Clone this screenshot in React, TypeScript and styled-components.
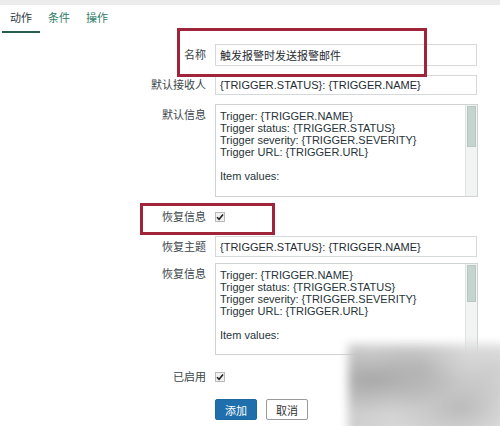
import React from "react";
import styled, { createGlobalStyle } from "styled-components";

const GlobalStyle = createGlobalStyle`
  html, body {
    margin: 0;
    padding: 0;
    background: #fff;
  }
  body {
    font-family: Arial, "Liberation Sans", "Noto Sans CJK SC", sans-serif;
    color: #1f2c33;
  }
`;

const defaultMessage = `Trigger: {TRIGGER.NAME}
Trigger status: {TRIGGER.STATUS}
Trigger severity: {TRIGGER.SEVERITY}
Trigger URL: {TRIGGER.URL}

Item values:

1. {ITEM.NAME1} ({HOST.NAME1}:{ITEM.KEY1}): {ITEM.VALUE1}
2. {ITEM.NAME2} ({HOST.NAME2}:{ITEM.KEY2}): {ITEM.VALUE2}
3. {ITEM.NAME3} ({HOST.NAME3}:{ITEM.KEY3}): {ITEM.VALUE3}

Original event ID: {EVENT.ID}`;

const tabs = ["动作", "条件", "操作"];

const MessageBox = ({ h, thumb }: { h: number; thumb: number }) => (
  <AreaWrap $h={h}>
    <TextArea defaultValue={defaultMessage} />
    <Track>
      <Thumb $h={thumb} />
    </Track>
  </AreaWrap>
);

const CheckBox = () => (
  <Box>
    <svg width="8" height="8" viewBox="0 0 8 8">
      <path d="M1 4.2 L3.1 6.3 L7 1.6" fill="none" stroke="#222" strokeWidth="1.6" />
    </svg>
  </Box>
);

export default function App() {
  return (
    <Page>
      <GlobalStyle />
      <TopStrip />
      <TabBar>
        {tabs.map((t, i) => (
          <Tab key={t} $active={i === 0}>
            {t}
          </Tab>
        ))}
      </TabBar>

      <Form>
        <Row $mb={9}>
          <Label>名称</Label>
          <TextInput defaultValue="触发报警时发送报警邮件" />
        </Row>
        <Row $mb={9}>
          <Label>默认接收人</Label>
          <TextInput $h={20} defaultValue="{TRIGGER.STATUS}: {TRIGGER.NAME}" />
        </Row>
        <Row $mb={10} $top>
          <Label $pt={4}>默认信息</Label>
          <MessageBox h={93} thumb={41} />
        </Row>
        <Row $mb={9} $h={20}>
          <Label>恢复信息</Label>
          <CheckBox />
        </Row>
        <Row $mb={6}>
          <Label>恢复主题</Label>
          <TextInput $h={21} defaultValue="{TRIGGER.STATUS}: {TRIGGER.NAME}" />
        </Row>
        <Row $mb={12} $top>
          <Label $pt={4}>恢复信息</Label>
          <MessageBox h={92} thumb={37} />
        </Row>
        <Row $mb={12} $h={20}>
          <Label>已启用</Label>
          <CheckBox />
        </Row>
        <Row $mb={0}>
          <span />
          <Buttons>
            <Button $primary>添加</Button>
            <Button>取消</Button>
          </Buttons>
        </Row>
      </Form>

      <Annotation $x={177} $y={28} $w={250} $h={49} />
      <Annotation $x={140} $y={203} $w={135} $h={32} />
      <Watermark />
    </Page>
  );
}

const Page = styled.div`
  position: relative;
  width: 500px;
  height: 426px;
  overflow: hidden;
`;

const TopStrip = styled.div`
  height: 5px;
  background: #ececec;
`;

const TabBar = styled.div`
  display: flex;
  padding-left: 2px;
`;

const Tab = styled.div<{ $active?: boolean }>`
  padding: 0 8px;
  font-size: 11px;
  line-height: 26px;
  color: ${(p) => (p.$active ? "#2b3a3f" : "#2f7d68")};
  border-bottom: 2px solid ${(p) => (p.$active ? "#255e4f" : "transparent")};
`;

const Form = styled.div`
  padding-top: 11px;
`;

const Row = styled.div<{ $mb: number; $top?: boolean; $h?: number }>`
  display: grid;
  grid-template-columns: 206px 263px;
  column-gap: 9px;
  align-items: ${(p) => (p.$top ? "start" : "center")};
  margin-bottom: ${(p) => p.$mb}px;
  ${(p) => (p.$h ? `height: ${p.$h}px;` : "")}
`;

const Label = styled.div<{ $pt?: number }>`
  text-align: right;
  font-size: 11px;
  line-height: 14px;
  color: #3a4549;
  padding-top: ${(p) => p.$pt || 0}px;
`;

const TextInput = styled.input<{ $h?: number }>`
  box-sizing: border-box;
  width: 262px;
  height: ${(p) => p.$h || 22}px;
  border: 1px solid #d6d9da;
  padding: 0 4px;
  font-family: Arial, "Liberation Sans", "Noto Sans CJK SC", sans-serif;
  font-size: 11px;
  color: #1f2c33;
  outline: none;
`;

const AreaWrap = styled.div<{ $h: number }>`
  position: relative;
  box-sizing: border-box;
  width: 263px;
  height: ${(p) => p.$h}px;
  border: 1px solid #cfd3d4;
  overflow: hidden;
`;

const TextArea = styled.textarea`
  display: block;
  box-sizing: border-box;
  width: 100%;
  height: 100%;
  border: none;
  padding: 5px 16px 0 4px;
  font-family: Arial, "Liberation Sans", sans-serif;
  font-size: 11px;
  line-height: 12px;
  color: #27343a;
  resize: none;
  overflow: hidden;
  outline: none;
`;

const Track = styled.div`
  position: absolute;
  top: 0;
  right: 0;
  bottom: 0;
  width: 11px;
  background: #f2f3f3;
  border-left: 1px solid #e2e4e4;
`;

const Thumb = styled.div<{ $h: number }>`
  margin: 1px 1px 0;
  height: ${(p) => p.$h}px;
  background: #c6d4cf;
  border: 1px solid #b6c6c0;
  box-sizing: border-box;
`;

const Box = styled.span`
  box-sizing: border-box;
  width: 10px;
  height: 10px;
  border: 1px solid #b9b9b9;
  background: #f1f1f1;
  display: flex;
  align-items: center;
  justify-content: center;
`;

const Buttons = styled.div`
  display: flex;
  gap: 9px;
`;

const Button = styled.button<{ $primary?: boolean }>`
  box-sizing: border-box;
  width: 42px;
  height: 21px;
  padding: 0;
  border-radius: 2px;
  font-family: Arial, "Liberation Sans", "Noto Sans CJK SC", sans-serif;
  font-size: 11px;
  border: 1px solid ${(p) => (p.$primary ? "#1d6aa3" : "#9a9a9a")};
  background: ${(p) => (p.$primary ? "#1f6fac" : "#fff")};
  color: ${(p) => (p.$primary ? "#fff" : "#333")};
`;

const Annotation = styled.div<{ $x: number; $y: number; $w: number; $h: number }>`
  position: absolute;
  left: ${(p) => p.$x}px;
  top: ${(p) => p.$y}px;
  width: ${(p) => p.$w}px;
  height: ${(p) => p.$h}px;
  box-sizing: border-box;
  border: 3px solid #a1253a;
  pointer-events: none;
`;

const Watermark = styled.div`
  position: absolute;
  left: 348px;
  top: 344px;
  width: 160px;
  height: 90px;
  pointer-events: none;
  filter: blur(5px);
  background:
    radial-gradient(ellipse at 15% 40%, rgba(150, 150, 150, 0.7) 0%, transparent 45%),
    radial-gradient(ellipse at 45% 25%, rgba(170, 170, 170, 0.6) 0%, transparent 40%),
    radial-gradient(ellipse at 70% 70%, rgba(160, 160, 160, 0.6) 0%, transparent 45%),
    radial-gradient(ellipse at 90% 30%, rgba(190, 190, 190, 0.6) 0%, transparent 40%),
    linear-gradient(90deg, #cdcdcd, #dcdcdc 50%, #e6e6e6);
`;
